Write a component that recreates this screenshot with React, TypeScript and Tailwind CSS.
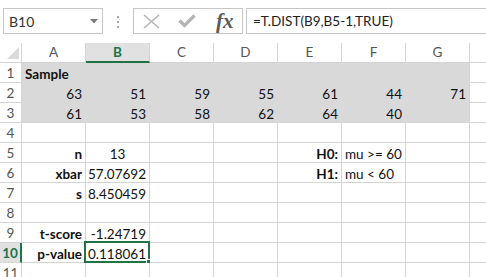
import React from "react";

type Cell = {
  text?: string;
  bold?: boolean;
  align?: "left" | "right" | "center";
};

const cols = ["A", "B", "C", "D", "E", "F", "G", "H"];

// sheet content, keyed by row number then column letter
const data: Record<number, Record<string, Cell>> = {
  1: { A: { text: "Sample", bold: true, align: "left" } },
  2: {
    A: { text: "63" }, B: { text: "51" }, C: { text: "59" }, D: { text: "55" },
    E: { text: "61" }, F: { text: "44" }, G: { text: "71" },
  },
  3: {
    A: { text: "61" }, B: { text: "53" }, C: { text: "58" }, D: { text: "62" },
    E: { text: "64" }, F: { text: "40" },
  },
  5: {
    A: { text: "n", bold: true },
    B: { text: "13", align: "center" },
    E: { text: "H0:", bold: true },
    F: { text: "mu >= 60", align: "left" },
  },
  6: {
    A: { text: "xbar", bold: true },
    B: { text: "57.07692" },
    E: { text: "H1:", bold: true },
    F: { text: "mu < 60", align: "left" },
  },
  7: { A: { text: "s", bold: true }, B: { text: "8.450459" } },
  9: { A: { text: "t-score", bold: true }, B: { text: "-1.24719" } },
  10: { A: { text: "p-value", bold: true }, B: { text: "0.118061" } },
};

const rows = [1, 2, 3, 4, 5, 6, 7, 8, 9, 10, 11];

function isShaded(row: number, col: string) {
  return row <= 3 && col !== "H";
}

function FormulaBar() {
  return (
    <div className="flex h-[43px] items-start pt-[8px] pl-[3px] bg-white">
      <div className="relative flex h-[26px] w-[100px] items-center border border-[#c6c6c6] pl-[5px] text-[14px] text-[#333]">
        B10
        <svg className="absolute left-[86px] top-[10px]" width="8" height="5" viewBox="0 0 8 5">
          <path d="M0 0 L8 0 L4 4.5 Z" fill="#7a7a7a" />
        </svg>
      </div>
      <div className="flex w-[30px] flex-col items-center gap-[3px] pt-[8px]">
        <div className="h-[2px] w-[2px] bg-[#a8a8a8]" />
        <div className="h-[2px] w-[2px] bg-[#a8a8a8]" />
        <div className="h-[2px] w-[2px] bg-[#a8a8a8]" />
      </div>
      <div className="flex h-[26px] w-[110px] items-center border border-[#c6c6c6]">
        <svg className="ml-[9px]" width="17" height="15" viewBox="0 0 17 15">
          <path d="M1 1 L16 14 M16 1 L1 14" stroke="#b4b4b4" strokeWidth="1.6" />
        </svg>
        <svg className="ml-[18px]" width="18" height="14" viewBox="0 0 18 14">
          <path d="M1.5 6.5 L6.5 11.5 L16.5 1.5" stroke="#b4b4b4" strokeWidth="3.2" fill="none" />
        </svg>
        <span className="ml-[20px] font-['Liberation_Serif',serif] text-[21px] font-bold italic text-[#5a5a5a] leading-none">
          fx
        </span>
      </div>
      <div className="ml-[3px] flex h-[26px] flex-1 items-center border border-r-0 border-[#c6c6c6] pl-[6px] text-[13.5px] text-[#222]">
        =T.DIST(B9,B5-1,TRUE)
      </div>
    </div>
  );
}

function HeaderRow() {
  return (
    <div className="flex h-[20px]">
      <div className="relative h-[20px] w-[22px] shrink-0 border-r border-b border-[#d4d4d4] bg-white">
        <svg className="absolute left-[7px] top-[4px]" width="12" height="12" viewBox="0 0 12 12">
          <path d="M12 0 L12 12 L0 12 Z" fill="#dadada" />
        </svg>
      </div>
      {cols.map((c) =>
        c === "B" ? (
          <div
            key={c}
            className="flex h-[20px] w-[64px] shrink-0 items-center justify-center border-r border-[#d4d4d4] border-b-2 border-b-[#217346] bg-[#e1e1e1] font-bold text-[#217346]"
          >
            {c}
          </div>
        ) : (
          <div
            key={c}
            className="flex h-[20px] w-[64px] shrink-0 items-center justify-center border-r border-b border-[#d4d4d4] bg-white text-[#555]"
          >
            {c === "H" ? "" : c}
          </div>
        )
      )}
    </div>
  );
}

function SheetRow({ row }: { row: number }) {
  const active = row === 10;
  return (
    <div className="flex h-[20px]">
      {active ? (
        <div className="flex h-[20px] w-[22px] shrink-0 items-center justify-center border-r-2 border-r-[#217346] border-b border-[#d4d4d4] bg-[#e1e1e1] pt-[2px] font-bold text-[#217346]">
          {row}
        </div>
      ) : (
        <div className="flex h-[20px] w-[22px] shrink-0 items-center justify-center border-r border-b border-[#d4d4d4] bg-white pt-[2px] text-[#555]">
          {row}
        </div>
      )}
      {cols.map((c) => {
        const cell = data[row]?.[c];
        const shaded = isShaded(row, c);
        const nextShaded = row < 3 && c !== "H";
        const align = cell?.align ?? "right";
        return (
          <div
            key={c}
            className={
              "relative flex h-[20px] w-[64px] shrink-0 items-end leading-[16px] whitespace-nowrap border-r border-b " +
              (shaded ? "bg-[#d9d9d9] " : "bg-white ") +
              (shaded && c !== "G" ? "border-r-[#d9d9d9] " : "border-r-[#d4d4d4] ") +
              (nextShaded ? "border-b-[#d9d9d9] " : "border-b-[#d4d4d4] ") +
              (align === "left"
                ? "justify-start pl-[3px] "
                : align === "center"
                ? "justify-center "
                : "justify-end pr-[3px] ") +
              (cell?.bold ? "font-bold" : "")
            }
          >
            {cell?.text}
            {active && c === "B" && (
              <div className="absolute -left-[2px] -top-[2px] h-[22px] w-[66px] border-2 border-[#217346]">
                <div className="absolute -right-[4px] -bottom-[4px] h-[6px] w-[6px] border border-white bg-[#217346]" />
              </div>
            )}
          </div>
        );
      })}
    </div>
  );
}

export default function App() {
  return (
    <div className="h-[277px] w-[486px] overflow-hidden bg-white font-['Lato',sans-serif] text-[13.5px] text-[#111]">
      <FormulaBar />
      <HeaderRow />
      {rows.map((r) => (
        <SheetRow key={r} row={r} />
      ))}
    </div>
  );
}
